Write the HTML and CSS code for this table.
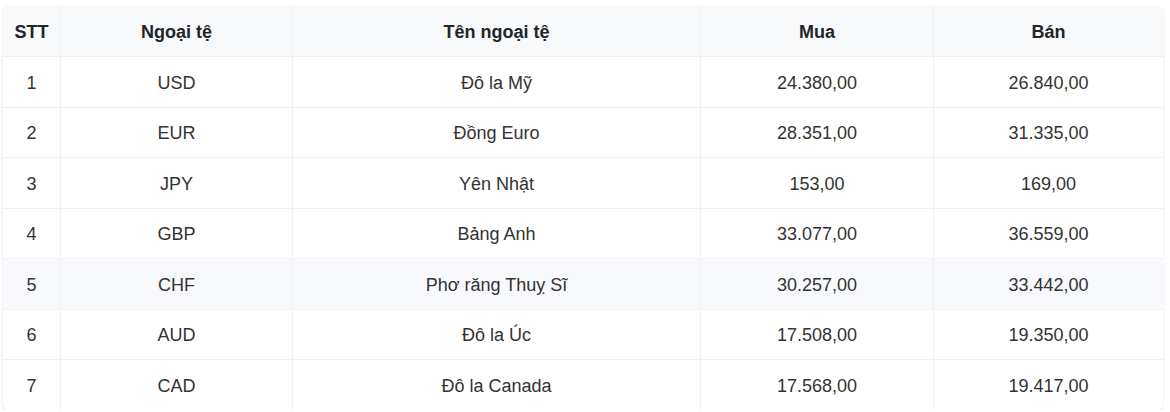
FILE: index.html
```html
<!DOCTYPE html>
<html lang="vi">
<head>
<meta charset="utf-8">
<link rel="stylesheet" href="styles.css">
</head>
<body>
<div class="wrap">
  <table class="rates">
    <colgroup>
      <col class="c-stt"><col class="c-code"><col class="c-name"><col class="c-buy"><col class="c-sell">
    </colgroup>
    <thead>
      <tr><th>STT</th><th>Ngoại tệ</th><th>Tên ngoại tệ</th><th>Mua</th><th>Bán</th></tr>
    </thead>
    <tbody>
      <tr><td>1</td><td>USD</td><td>Đô la Mỹ</td><td>24.380,00</td><td>26.840,00</td></tr>
      <tr><td>2</td><td>EUR</td><td>Đồng Euro</td><td>28.351,00</td><td>31.335,00</td></tr>
      <tr><td>3</td><td>JPY</td><td>Yên Nhật</td><td>153,00</td><td>169,00</td></tr>
      <tr><td>4</td><td>GBP</td><td>Bảng Anh</td><td>33.077,00</td><td>36.559,00</td></tr>
      <tr class="hover"><td>5</td><td>CHF</td><td>Phơ răng Thuỵ Sĩ</td><td>30.257,00</td><td>33.442,00</td></tr>
      <tr><td>6</td><td>AUD</td><td>Đô la Úc</td><td>17.508,00</td><td>19.350,00</td></tr>
      <tr><td>7</td><td>CAD</td><td>Đô la Canada</td><td>17.568,00</td><td>19.417,00</td></tr>
    </tbody>
  </table>
</div>
</body>
</html>
```
FILE: styles.css
```css
html, body {
  margin: 0;
  background: #ffffff;
}
body {
  font-family: "Liberation Sans", Arial, sans-serif;
  font-size: 18px;
  color: #333333;
}
.wrap {
  padding: 6px 7px 0 3px;
}
.rates {
  width: 1160px;
  border-collapse: separate;
  border-spacing: 0;
  border-radius: 6px;
  box-shadow: 0 1px 3px rgba(0, 0, 0, 0.12);
  overflow: hidden;
  table-layout: fixed;
}
.c-stt { width: 58px; }
.c-code { width: 232px; }
.c-name { width: 408px; }
.c-buy { width: 233px; }
.c-sell { width: 229px; }
.rates th, .rates td {
  text-align: center;
  padding: 15.5px 2px 14px;
  line-height: 20px;
  border-bottom: 1px solid #eef0f3;
  border-right: 1px solid #eef0f3;
}
.rates th:last-child, .rates td:last-child {
  border-right: none;
}
.rates tbody tr:last-child td {
  border-bottom: none;
}
.rates th {
  background: #f8f9fb;
  color: #212529;
  font-weight: bold;
  padding-top: 15.5px;
  padding-bottom: 14.5px;
}
.rates tr.hover td {
  background: #f7f9fc;
}
```
